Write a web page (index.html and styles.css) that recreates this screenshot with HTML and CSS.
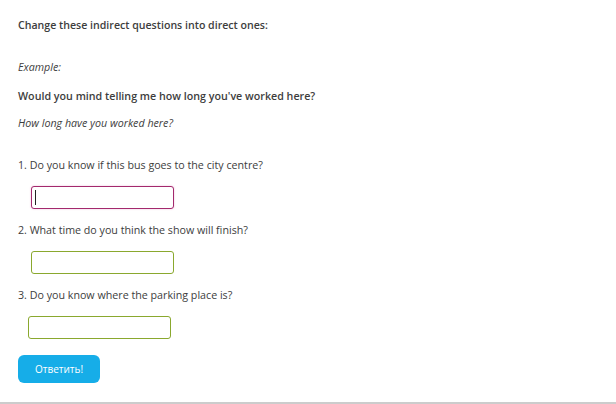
FILE: index.html
```html
<!DOCTYPE html>
<html lang="en">
<head>
    <meta charset="UTF-8">
    <meta name="viewport" content="width=device-width, initial-scale=1.0">
    <title>Indirect questions</title>
    <link rel="stylesheet" href="styles.css">
</head>
<body>

<div class="task">
    <p class="task-title">Change these indirect questions into direct ones:</p>

    <p class="example-label">Example:</p>
    <p class="example-question">Would you mind telling me how long you've worked here?</p>
    <p class="example-answer">How long have you worked here?</p>

    <form class="answers">
        <p class="question">1. Do you know if this bus goes to the city centre?</p>
        <span class="field field-active">
            <input type="text" class="answer answer-active">
            <span class="caret"></span>
        </span>

        <p class="question">2. What time do you think the show will finish?</p>
        <span class="field">
            <input type="text" class="answer">
        </span>

        <p class="question">3. Do you know where the parking place is?</p>
        <span class="field field-last">
            <input type="text" class="answer">
        </span>

        <button type="button" class="submit">Ответить!</button>
    </form>
</div>

</body>
</html>
```

FILE: styles.css
```css
body {
    font-family: "Open Sans", Arial, sans-serif;
    font-size: 10.7px;
    color: #3d3d3d;
    background-color: #FFFFFF;
    margin: 0;
}
.task {
    padding: 17px 18px 0 18px;
    height: 385px;
    border-bottom: 2px solid #cccccc;
}
p {
    margin: 0;
    line-height: 16px;
}
.task-title {
    font-weight: 600;
    font-size: 10.6px;
}
.example-label {
    font-style: italic;
    margin-top: 26px;
}
.example-question {
    font-weight: 600;
    margin-top: 13px;
}
.example-answer {
    font-style: italic;
    margin-top: 11px;
}
.answers {
    margin: 0;
}
.question {
    margin-top: 26px;
}
.answers .field + .question {
    margin-top: 13px;
}
.field {
    display: block;
    position: relative;
    margin: 13px 0 0 13px;
    width: 143px;
    height: 23px;
}
.field-last {
    margin-left: 10px;
}
.answer {
    box-sizing: border-box;
    width: 143px;
    height: 23px;
    margin: 0;
    padding: 0 4px;
    border: 1px solid #8aa82e;
    border-radius: 3px;
    background-color: #FFFFFF;
    outline: none;
}
.answer-active {
    border-color: #a3296d;
    box-shadow: 0 0 2px rgba(200, 60, 140, 0.35);
}
.caret {
    position: absolute;
    left: 4px;
    top: 4px;
    width: 1px;
    height: 15px;
    background-color: #222222;
}
.submit {
    display: block;
    margin-top: 16px;
    width: 82px;
    height: 28px;
    padding: 0;
    border: none;
    border-radius: 6px;
    background-color: #16ade8;
    color: #FFFFFF;
    font-family: "Open Sans", Arial, sans-serif;
    font-size: 10px;
}
```
